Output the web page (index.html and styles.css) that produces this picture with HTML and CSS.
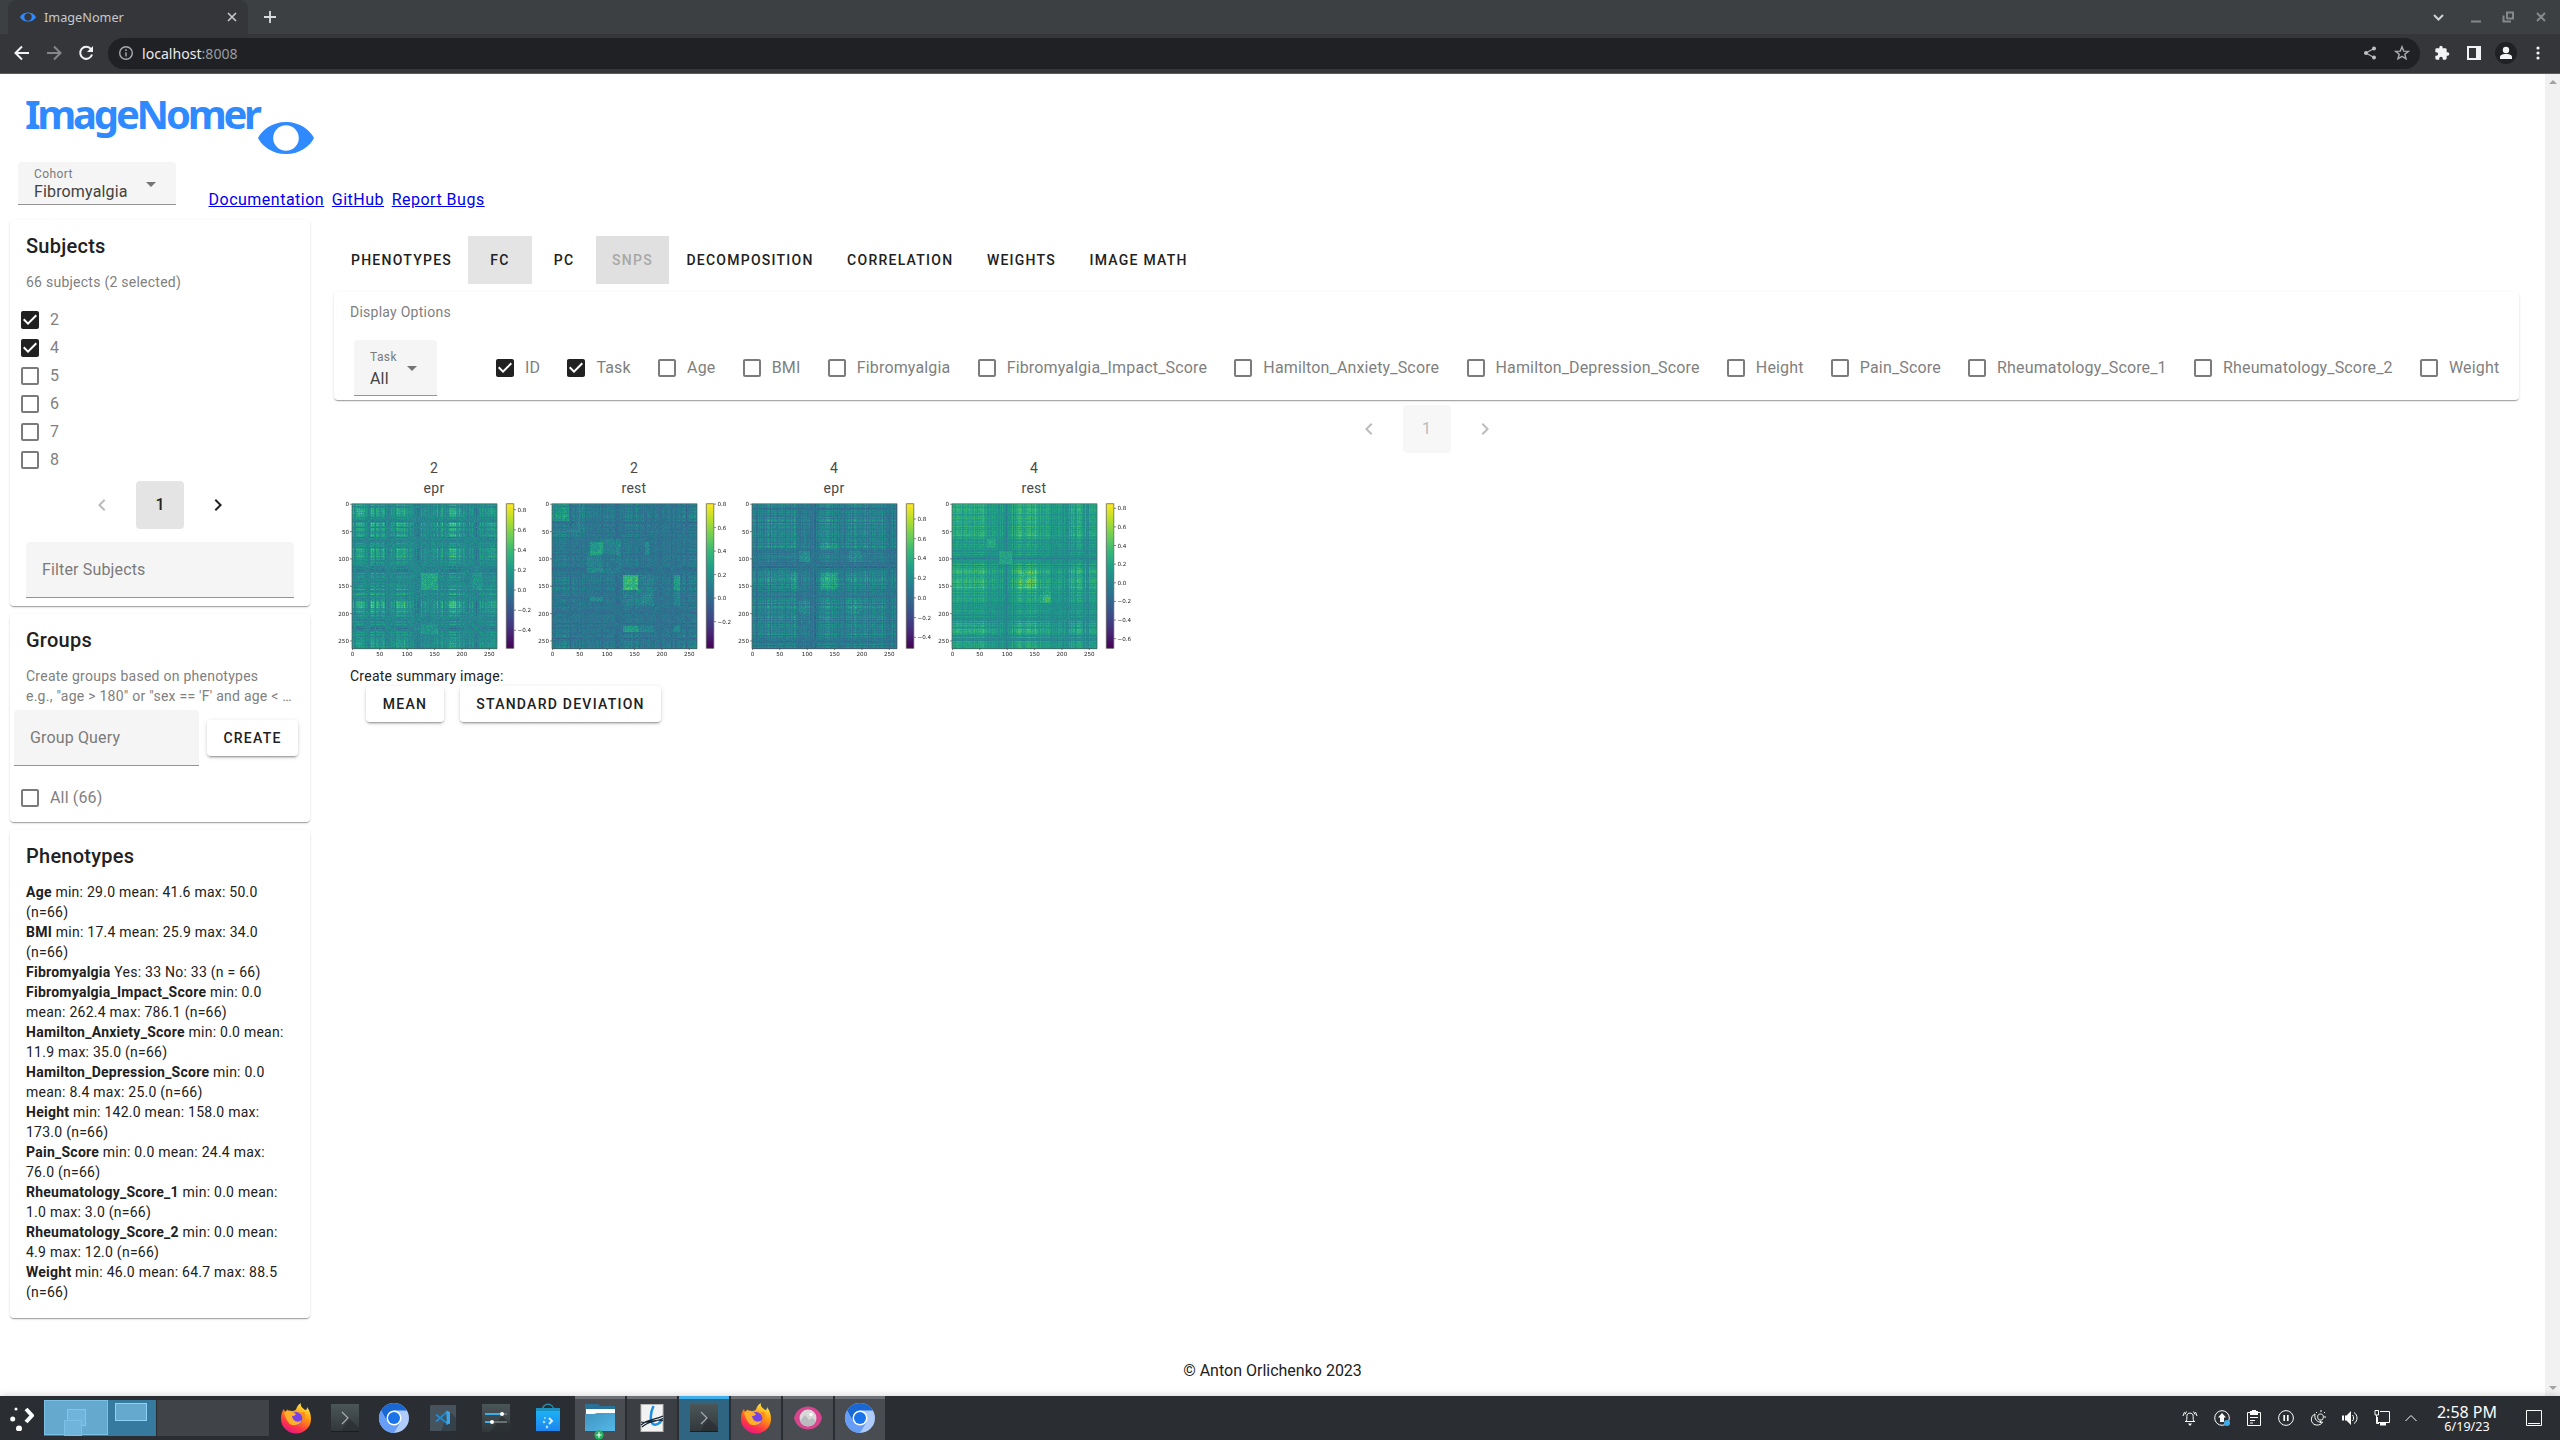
FILE: index.html
```html
<!DOCTYPE html>
<html lang="en">
<head>
<meta charset="utf-8">
<title>ImageNomer</title>
<link rel="stylesheet" href="styles.css">
</head>
<body>
<svg class="defs" width="0" height="0">
  <symbol id="box" viewBox="0 0 24 24"><path d="M19,3H5C3.89,3 3,3.89 3,5V19A2,2 0 0,0 5,21H19A2,2 0 0,0 21,19V5C21,3.89 20.1,3 19,3M19,5V19H5V5H19Z"/></symbol>
  <symbol id="box-on" viewBox="0 0 24 24"><path d="M10,17L5,12L6.41,10.58L10,14.17L17.59,6.58L19,8M19,3H5C3.89,3 3,3.89 3,5V19C3,20.1 3.89,21 5,21H19C20.1,21 21,20.1 21,19V5C21,3.89 20.1,3 19,3Z"/></symbol>
  <symbol id="left" viewBox="0 0 24 24"><path d="M15.41,16.58L10.83,12L15.41,7.41L14,6L8,12L14,18L15.41,16.58Z"/></symbol>
  <symbol id="right" viewBox="0 0 24 24"><path d="M8.59,16.58L13.17,12L8.59,7.41L10,6L16,12L10,18L8.59,16.58Z"/></symbol>
  <symbol id="down" viewBox="0 0 24 24"><path d="M7,10L12,15L17,10H7Z"/></symbol>
  <symbol id="eye" viewBox="0 0 56 32"><path fill-rule="evenodd" d="M0 16C4 8 14 0 28 0S52 8 56 16C52 24 42 32 28 32S4 24 0 16ZM28 3.3a12.8 12.7 0 1 0 0 25.4a12.8 12.7 0 1 0 0-25.4Z"/></symbol>
  <linearGradient id="ffBody" x1=".8" y1="0" x2=".3" y2="1"><stop offset="0" stop-color="#fff44f"/><stop offset=".4" stop-color="#ff980e"/><stop offset=".75" stop-color="#ff3647"/><stop offset="1" stop-color="#e31587"/></linearGradient>
  <linearGradient id="slate" x1="0" y1="0" x2="0" y2="1"><stop offset="0" stop-color="#4b5659"/><stop offset="1" stop-color="#31373a"/></linearGradient>
  <linearGradient id="folder" x1="0" y1="0" x2="1" y2="1"><stop offset="0" stop-color="#3f94be"/><stop offset="1" stop-color="#54b8ea"/></linearGradient>
  <linearGradient id="bag" x1="0" y1="0" x2="0" y2="1"><stop offset="0" stop-color="#1cb8f6"/><stop offset="1" stop-color="#1d83f0"/></linearGradient>
  <symbol id="firefox" viewBox="0 0 32 32">
    <path fill="url(#ffBody)" d="M21 1c-1 3 1 4.500 4 7c2 0 2-2 2-3c3 4 4 8 4 12a15 14.500 0 0 1-30 0c0-5 1-8 3-10l1 3c1-1 2-1.500 2-3c1 2 2 2 4 2.500c2-.5 4-1 5-2c1-3 2-5 5-6.500Z"/>
    <circle cx="16" cy="16.500" r="6.500" fill="#7542e5"/>
    <path fill="#ffb02a" d="M4 11c3-3 6-3 9-1l3 2c-1 2-3 2-4 2c1 6 6 7 10 4c-2 6-11 7-14 2c-2-3-3-6-4-9Z"/>
    <path fill="#ff8a16" d="M19 11c4 1 5 5 3 8c3-1 4-6 2-9Z"/>
  </symbol>
  <symbol id="konsole" viewBox="0 0 32 32">
    <rect x="2" y="2" width="28" height="28" fill="url(#slate)"/><path d="M20 16L30 26V30H12Z" fill="#262c2e" opacity=".6"/>
    <path d="M13 10L19 16L13 22" fill="none" stroke="#a8acae" stroke-width="1.200"/><path d="M2 29.500H30" stroke="#191e20"/>
  </symbol>
  <symbol id="chromium" viewBox="0 0 32 32">
    <circle cx="16" cy="16" r="15" fill="#aecbfa"/>
    <path fill="#1967d2" d="M3 8.500A15 15 0 0 1 29 8.500H16L9.500 20Z"/>
    <path fill="#669df6" d="M3 8.500A15 15 0 0 0 16 31L22.500 20L16 16L9.500 19.700Z"/>
    <circle cx="16" cy="16" r="7.500" fill="#fff"/><circle cx="16" cy="16" r="6" fill="#1a73e8"/>
  </symbol>
</svg>

<header class="browser">
  <div class="tabstrip">
    <div class="tab">
      <svg class="fav" width="16" height="10"><use href="#eye"/></svg>
      <span>ImageNomer</span>
      <svg class="tab-x" width="10" height="10" viewBox="0 0 10 10"><path d="M1 1L9 9M9 1L1 9"/></svg>
    </div>
    <svg class="plus" width="12" height="12" viewBox="0 0 12 12"><path d="M6 0V12M0 6H12"/></svg>
    <svg class="wm" width="116" height="14" viewBox="0 0 116 14">
      <path class="lit" d="M2 5L6.500 9.500L11 5"/><path d="M39 11.500H49M71.500 5.500V11.500H79M75 9V2.500H81V8.500H75ZM105 3L113 11M113 3L105 11"/>
    </svg>
  </div>
  <div class="toolbar">
    <div class="nav">
      <svg width="20" height="20" viewBox="0 0 20 20"><path d="M17 10H4M10 3.500L3.500 10L10 16.500"/></svg>
      <svg class="dim" width="20" height="20" viewBox="0 0 20 20"><path d="M3 10H16M10 3.500L16.500 10L10 16.500"/></svg>
      <svg width="20" height="20" viewBox="0 0 20 20"><path d="M15 6.200A6 6 0 1 0 16 11.500"/><path class="solid" d="M17 3V9H11Z"/></svg>
    </div>
    <div class="omni">
      <svg width="16" height="16" viewBox="0 0 16 16"><circle cx="8" cy="8" r="6.300"/><path d="M8 7.200V11.500M8 4.300V6"/></svg>
      <span class="url">localhost<span class="port">:8008</span></span>
      <svg class="share" width="16" height="16" viewBox="0 0 16 16"><path d="M12 3.500L4 8L12 12.500"/><circle class="solid" cx="12" cy="3.500" r="2"/><circle class="solid" cx="4" cy="8" r="2"/><circle class="solid" cx="12" cy="12.500" r="2"/></svg>
      <svg width="16" height="16" viewBox="0 0 16 16"><path d="M8 1.800L9.700 6.100L14.300 6.400L10.800 9.300L12 13.800L8 11.300L4 13.800L5.200 9.300L1.700 6.400L6.300 6.100Z"/></svg>
    </div>
    <div class="actions">
      <svg width="16" height="16" viewBox="0 0 24 24"><path d="M20.500 11H19V7a2 2 0 0 0-2-2h-4V3.500a2.500 2.500 0 0 0-5 0V5H4a2 2 0 0 0-2 2v3.800h1.500a2.700 2.700 0 0 1 0 5.400H2V20a2 2 0 0 0 2 2h3.800v-1.500a2.700 2.700 0 0 1 5.400 0V22H17a2 2 0 0 0 2-2v-4h1.500a2.500 2.500 0 0 0 0-5z"/></svg>
      <svg width="16" height="16" viewBox="0 0 16 16"><path fill-rule="evenodd" d="M1 1H15V15H1ZM3 3V13H10V3Z"/></svg>
      <svg width="22" height="22" viewBox="0 0 22 22"><circle cx="11" cy="11" r="11" fill="#202124"/><circle cx="11" cy="8" r="3.200"/><path d="M5 17V15C5 12.500 9 12 11 12S17 12.500 17 15V17Z"/></svg>
      <svg width="4" height="14" viewBox="0 0 4 14"><circle cx="2" cy="2" r="1.600"/><circle cx="2" cy="7" r="1.600"/><circle cx="2" cy="12" r="1.600"/></svg>
    </div>
  </div>
</header>

<div class="viewport">
  <div class="page">
    <svg class="logo" width="310" height="88" viewBox="0 0 310 88">
      <text x="15" y="54.500" textLength="237">ImageNomer</text>
      <svg x="248" y="48" width="56" height="32"><use href="#eye"/></svg>
    </svg>
    <div class="top-row">
      <div class="select cohort"><div><small>Cohort</small><span>Fibromyalgia</span></div><svg width="24" height="24"><use href="#down"/></svg></div>
      <nav class="links"><a href="#">Documentation</a><a href="#">GitHub</a><a href="#">Report Bugs</a></nav>
    </div>

    <div class="columns">
      <aside>
        <section class="card subjects">
          <h2>Subjects</h2>
          <p class="sub">66 subjects (2 selected)</p>
          <div class="checks">
            <label class="check on"><svg><use href="#box-on"/></svg>2</label>
            <label class="check on"><svg><use href="#box-on"/></svg>4</label>
            <label class="check"><svg><use href="#box"/></svg>5</label>
            <label class="check"><svg><use href="#box"/></svg>6</label>
            <label class="check"><svg><use href="#box"/></svg>7</label>
            <label class="check"><svg><use href="#box"/></svg>8</label>
          </div>
          <div class="pager"><svg class="off"><use href="#left"/></svg><b>1</b><svg><use href="#right"/></svg></div>
          <div class="field filter">Filter Subjects</div>
        </section>

        <section class="card groups">
          <h2>Groups</h2>
          <p class="sub">Create groups based on phenotypes<br>e.g., "age &gt; 180" or "sex == 'F' and age &lt; …</p>
          <div class="query"><div class="field">Group Query</div><button class="btn">CREATE</button></div>
          <label class="check all"><svg><use href="#box"/></svg>All (66)</label>
        </section>

        <section class="card phenotypes">
          <h2>Phenotypes</h2>
          <div class="stats">
            <p><b>Age</b> min: 29.0 mean: 41.6 max: 50.0<br>(n=66)</p>
            <p><b>BMI</b> min: 17.4 mean: 25.9 max: 34.0<br>(n=66)</p>
            <p><b>Fibromyalgia</b> Yes: 33 No: 33 (n = 66)</p>
            <p><b>Fibromyalgia_Impact_Score</b> min: 0.0<br>mean: 262.4 max: 786.1 (n=66)</p>
            <p><b>Hamilton_Anxiety_Score</b> min: 0.0 mean:<br>11.9 max: 35.0 (n=66)</p>
            <p><b>Hamilton_Depression_Score</b> min: 0.0<br>mean: 8.4 max: 25.0 (n=66)</p>
            <p><b>Height</b> min: 142.0 mean: 158.0 max:<br>173.0 (n=66)</p>
            <p><b>Pain_Score</b> min: 0.0 mean: 24.4 max:<br>76.0 (n=66)</p>
            <p><b>Rheumatology_Score_1</b> min: 0.0 mean:<br>1.0 max: 3.0 (n=66)</p>
            <p><b>Rheumatology_Score_2</b> min: 0.0 mean:<br>4.9 max: 12.0 (n=66)</p>
            <p><b>Weight</b> min: 46.0 mean: 64.7 max: 88.5<br>(n=66)</p>
          </div>
        </section>
      </aside>

      <main>
        <div class="tabs">
          <span>PHENOTYPES</span><span class="active">FC</span><span>PC</span><span class="disabled">SNPS</span><span>DECOMPOSITION</span><span>CORRELATION</span><span>WEIGHTS</span><span>IMAGE MATH</span>
        </div>
        <section class="card options">
          <p class="sub">Display Options</p>
          <div class="option-row">
            <div class="select task"><div><small>Task</small><span>All</span></div><svg width="24" height="24"><use href="#down"/></svg></div>
            <label class="check on"><svg><use href="#box-on"/></svg>ID</label>
            <label class="check on"><svg><use href="#box-on"/></svg>Task</label>
            <label class="check"><svg><use href="#box"/></svg>Age</label>
            <label class="check"><svg><use href="#box"/></svg>BMI</label>
            <label class="check"><svg><use href="#box"/></svg>Fibromyalgia</label>
            <label class="check"><svg><use href="#box"/></svg>Fibromyalgia_Impact_Score</label>
            <label class="check"><svg><use href="#box"/></svg>Hamilton_Anxiety_Score</label>
            <label class="check"><svg><use href="#box"/></svg>Hamilton_Depression_Score</label>
            <label class="check"><svg><use href="#box"/></svg>Height</label>
            <label class="check"><svg><use href="#box"/></svg>Pain_Score</label>
            <label class="check"><svg><use href="#box"/></svg>Rheumatology_Score_1</label>
            <label class="check"><svg><use href="#box"/></svg>Rheumatology_Score_2</label>
            <label class="check"><svg><use href="#box"/></svg>Weight</label>
          </div>
        </section>
        <div class="pager muted"><svg><use href="#left"/></svg><b>1</b><svg><use href="#right"/></svg></div>
        <div class="figures" id="figures"></div>
        <p class="summary">Create summary image:</p>
        <div class="buttons"><button class="btn mean">MEAN</button><button class="btn deviation">STANDARD DEVIATION</button></div>
      </main>
    </div>
    <footer>© Anton Orlichenko 2023</footer>
  </div>
  <div class="scrollbar"><i class="up"></i><i class="dn"></i></div>
</div>

<div class="taskbar">
  <svg class="kick" width="24" height="26" viewBox="0 0 24 26"><circle cx="6" cy="4" r="1.500"/><circle cx="2.700" cy="14" r="2.500"/><circle cx="9" cy="23.500" r="3"/><path d="M16 4L22 10.500L16 17" fill="none" stroke="#fff" stroke-width="4"/></svg>
  <svg class="desks" width="226" height="36" viewBox="0 0 226 36">
    <rect width="112" height="36" fill="#367a9f"/><rect x=".5" y=".5" width="63" height="34" fill="#66a9cf" stroke="#7bc0e6"/>
    <rect x="23.500" y="9.500" width="18" height="16" fill="#71b4db" stroke="#83c6ec"/><rect x="20.500" y="20.500" width="17" height="15" fill="#71b4db" stroke="#7bc0e6"/>
    <rect x="71.500" y="3.500" width="31" height="17" fill="#66a9cf" stroke="#8fd2f7"/><rect x="113" width="112" height="36" fill="#404347"/>
  </svg>
  <div class="launchers">
    <svg><use href="#firefox"/></svg>
    <svg><use href="#konsole"/></svg>
    <svg><use href="#chromium"/></svg>
    <svg viewBox="0 0 32 32"><rect x="3" y="3" width="26" height="26" rx="1" fill="#46525c"/><path d="M22 9L29 16V29H14Z" fill="#35414b"/><path d="M9 12.500L20.500 21.500M9 19.500L20.500 9.500" stroke="#2489ca" stroke-width="2" fill="none"/><path d="M19.500 8.500L23 10V21.500L19.500 23Z" fill="#3ba5ea"/></svg>
    <svg viewBox="0 0 32 32"><rect x="2" y="2" width="28" height="28" fill="url(#slate)"/><path d="M22 14L30 22V30H10Z" fill="#262b2d" opacity=".6"/><path d="M5 12H22M5 20H12" stroke="#3daee9" stroke-width="2"/><path d="M22 12H27M12 20H27" stroke="#6b7073" stroke-width="2"/><circle cx="22" cy="12" r="2" fill="#fff"/><circle cx="12" cy="20" r="2" fill="#fff"/></svg>
    <svg viewBox="0 0 32 32"><path d="M10 9C10 0 22 0 22 9" fill="none" stroke="#2f8ca8" stroke-width="1.400"/><path d="M4 6H28V29H4Z" fill="url(#bag)"/><path d="M4 6H28V9H4Z" fill="#1b92c4"/><path d="M17 16L20 19L17 22" fill="none" stroke="#d6efff" stroke-width="2"/><circle cx="12" cy="20" r="1.300" fill="#a6dbff"/><circle cx="15" cy="25" r="1.400" fill="#a6dbff"/><circle cx="13" cy="16" r="1" fill="#a6dbff"/></svg>
  </div>
  <div class="tasks">
    <div class="run"><svg viewBox="0 0 32 32"><path d="M1 2H14L16 4H31V12H1Z" fill="#287299"/><rect x="2" y="7" width="29" height="5" fill="#fff"/><path d="M1 12H10L13 11H31V29H1Z" fill="url(#folder)"/></svg><svg class="badge" viewBox="0 0 10 10"><circle cx="5" cy="5" r="4.700" fill="#27ae60"/><path d="M5 2.300V7.700M2.300 5H7.700" stroke="#fff" stroke-width="1.100"/></svg></div>
    <div class="run plain"><svg viewBox="0 0 32 32"><rect x="5" y="2.500" width="22" height="27" fill="#f2f2f2" stroke="#b9b9b9"/><path d="M17.500 4C14 11 14 19 17 22C20 24 25 21 25.500 17" fill="none" stroke="#1d8ee0" stroke-width="2.500"/><path d="M5 23C12 17 19 18 27 14M6 25C14 18 21 20 27 16.500M5 20C11 22 17 17 27 18.500" fill="none" stroke="#16232e" stroke-width="1.200"/></svg></div>
    <div class="run focus"><svg><use href="#konsole"/></svg></div>
    <div class="run"><svg><use href="#firefox"/></svg></div>
    <div class="run"><svg viewBox="0 0 32 32"><path d="M2 16C4 8 10 4.500 16 4.500S28 8 30 16C28 24 22 27.500 16 27.500S4 24 2 16Z" fill="#d9448f"/><circle cx="16" cy="16" r="8.500" fill="#d8d8d8"/><path d="M8 19L13 13L17 18L20 16L24 19C22 26 10 26 8 19Z" fill="#b9bcbe"/><circle cx="19" cy="12.500" r="1.800" fill="#fff"/></svg></div>
    <div class="run"><svg><use href="#chromium"/></svg></div>
  </div>
  <div class="tray">
    <svg viewBox="0 0 16 16"><path d="M3 11.500H13M4 11.500C5.500 9 4.500 7 5 5C5.500 2.500 10.500 2.500 11 5C11.500 7 10.500 9 12 11.500M2.500 2L1 6M4.500 1.500L3 4.500M13.500 2L15 6M11.500 1.500L13 4.500"/><path class="solid" d="M6 13.500H10L8 16Z"/></svg>
    <svg viewBox="0 0 16 16"><circle cx="8" cy="8" r="7.300"/><path class="solid" d="M8 3L12 7.500H10V12H6V7.500H4Z"/><circle cx="13" cy="13" r="3" fill="#3daee9" stroke="none"/></svg>
    <svg viewBox="0 0 16 16"><path d="M4 2.500H1.500V15.500H14.500V2.500H12M4 7.500H12M4 10.500H9M4 13H7"/><path class="solid" d="M4 1H6V0H10V1H12V5H4Z"/></svg>
    <svg viewBox="0 0 16 16"><circle cx="8" cy="8" r="7.400"/><path d="M6.200 5V11M9.800 5V11" stroke-width="1.700"/></svg>
    <svg viewBox="0 0 16 16"><path d="M5 4C0 6 0 14 6 15C9 15.500 12 14 12.500 12C7 13 4 9 5 4ZM9 10C7 8 7 4 10.500 4S14 8 12 10ZM10.500 11V13M11 0V2M15 2L14 3M6 2L7 3M14 7H16"/></svg>
    <svg viewBox="0 0 16 16"><path class="solid" d="M0 5.500H2V10.500H0ZM3 5.500H4.500L9 1V15L4.500 10.500H3Z"/><path d="M10.500 5C12 7 12 9 10.500 11M12 2.500C16 5 16 11 12 13.500"/></svg>
    <svg viewBox="0 0 16 16"><path d="M6 1.500H15.500V12.500H3.500V7M1 .500H4.500V5H1ZM2.500 5V13.500H5"/><path class="solid" d="M6 13H12V15.500H6Z"/></svg>
    <svg class="caret" viewBox="0 0 12 8"><path d="M.5 7L6 1.500L11.500 7"/></svg>
  </div>
  <div class="clock"><span>2:58 PM</span><small>6/19/23</small></div>
  <svg class="show" width="16" height="16" viewBox="0 0 16 16"><path d="M.5 .5H15.500V15.500H.5ZM2 13.500H14"/></svg>
</div>
<script src="plots.js"></script>
</body>
</html>
```
FILE: styles.css
```css
* { box-sizing: border-box; }
body { margin: 0; width: 2560px; height: 1440px; overflow: hidden; display: flex; flex-direction: column; background: #fff; font-family: Roboto, sans-serif; color: #212121; }
p, h2 { margin: 0; }
.defs { position: absolute; }

/* browser window */
.browser { height: 74px; flex: none; font-family: "Noto Sans", sans-serif; border-bottom: 1px solid #5b5d61; background: #35363a; }
.tabstrip { height: 34px; background: #3c4043; display: flex; align-items: center; padding-left: 8px; }
.tab { width: 240px; height: 34px; background: #35363a; border-radius: 8px 8px 0 0; display: flex; align-items: center; padding: 0 11px 0 12px; font-size: 12.7px; color: #c6c8cb; }
.tab span { flex: 1; margin-left: 8px; }
.fav, .logo { fill: #2f8aff; }
.tab-x { fill: none; stroke: #c9cccf; stroke-width: 1.6; }
.plus { margin-left: 16px; stroke: #dadce0; stroke-width: 1.8; }
.wm { margin-left: auto; margin-right: 12px; fill: none; stroke: #85888b; stroke-width: 2; }
.wm .lit { stroke: #d0d3d6; }
.toolbar { height: 38px; display: flex; align-items: center; }
.nav { display: flex; gap: 12px; padding: 0 12px; width: 108px; }
.nav svg { fill: none; stroke: #f1f3f4; stroke-width: 2; flex: none; }
.nav .dim { stroke: #85878a; }
.nav .solid { fill: #f1f3f4; stroke: none; }
.omni { width: 2312px; height: 31px; border-radius: 16px; background: #202124; display: flex; align-items: center; padding: 0 10px; }
.omni svg { fill: none; stroke: #a9adb1; stroke-width: 1.4; }
.omni .solid { fill: #bdc1c6; stroke: none; }
.omni .share { margin-left: auto; margin-right: 16px; }
.url { margin-left: 8px; font-size: 14.1px; color: #e8eaed; }
.port { color: #989a9e; }
.actions { flex: 1; display: flex; align-items: center; padding-left: 14px; gap: 16px; }
.actions svg { fill: #f1f3f4; }
.actions svg:nth-child(3) { margin-left: -3px; }
.actions svg:nth-child(4) { margin-left: 3px; }

/* page */
.viewport { flex: 1; display: flex; min-height: 0; }
.page { width: 2545px; padding-left: 10px; }
.scrollbar { width: 15px; background: #f1f1f1; display: flex; flex-direction: column; justify-content: space-between; align-items: center; padding: 6px 0; }
.scrollbar i { border: 4px solid transparent; }
.scrollbar .up { border-top: 0; border-bottom-color: #a3a3a3; }
.scrollbar .dn { border-bottom: 0; border-top-color: #a3a3a3; }
.logo { display: block; overflow: visible; }
.logo text { font: bold 40px "Noto Sans", sans-serif; }
.top-row { height: 58px; display: flex; align-items: flex-start; padding-left: 8px; }
.select { background: #f5f5f5; border-bottom: 1px solid #949494; border-radius: 4px 4px 0 0; display: flex; justify-content: space-between; align-items: center; padding-left: 16px; }
.select div { display: flex; flex-direction: column; }
.select small { font-size: 12px; letter-spacing: .4px; color: #7b7b7b; line-height: 16px; }
.select span { font-size: 16px; letter-spacing: .15px; color: #424242; line-height: 20px; }
.select svg { fill: #757575; }
.cohort { width: 158px; height: 43px; padding-right: 13px; }
.cohort div { padding-top: 1px; }
.cohort svg { margin-top: 2px; }
.links { display: flex; gap: 7.6px; margin: 26px 0 0 32.500px; font-size: 16px; line-height: 24px; letter-spacing: .5px; }
.links a { color: #0000ee; }
.columns { display: flex; align-items: flex-start; gap: 24px; }
aside { width: 300px; display: flex; flex-direction: column; gap: 8px; }
.card { background: #fff; border-radius: 4px; box-shadow: 0 2px 1px -1px rgba(0,0,0,.2), 0 1px 1px rgba(0,0,0,.14), 0 1px 3px rgba(0,0,0,.12); }
.card h2 { font-size: 20px; font-weight: 500; letter-spacing: .25px; line-height: 32px; padding: 10px 16px; }
.sub { font-size: 14px; line-height: 20px; letter-spacing: .25px; color: #808080; padding: 0 16px; white-space: nowrap; }
.subjects { height: 386px; }
.groups { height: 208px; }
.phenotypes { height: 488px; }
.checks { padding: 14px 8px 0; }
.check { display: flex; align-items: center; height: 28px; padding-bottom: 1px; font-size: 16px; letter-spacing: .15px; color: #7f7f7f; white-space: nowrap; }
.check svg { width: 24px; height: 24px; fill: #7b7b7b; margin: 1px 8px 0 0; flex: none; }
.check.on svg { fill: #212121; }
.pager { display: flex; justify-content: center; align-items: center; gap: 22px; height: 48px; }
.pager svg { width: 24px; height: 24px; fill: #212121; }
.pager b { width: 48px; height: 48px; line-height: 48px; margin: 0; text-align: center; background: #e4e4e4; border-radius: 4px; font-size: 16px; font-weight: 500; }
.pager .off { fill: #bcbcbc; }
.pager.muted { color: #bcbcbc; margin-top: 5px; }
.pager.muted svg { fill: #bcbcbc; }
.pager.muted b { background: #f7f7f7; font-weight: 400; }
.subjects .pager { margin-top: 7px; }
.field { height: 56px; background: #f5f5f5; border-bottom: 1px solid #949494; border-radius: 4px 4px 0 0; padding-left: 16px; font-size: 16px; letter-spacing: .15px; line-height: 55px; color: #7b7b7b; }
.filter { margin: 13px 16px 0; }
.query { display: flex; align-items: center; gap: 8px; padding: 4px 12px 0 4px; }
.query .field { width: 185px; }
.btn { height: 36px; border: 0; background: #fff; border-radius: 4px; padding: 0; font: 500 14px Roboto, sans-serif; letter-spacing: 1.25px; color: #212121; white-space: nowrap; box-shadow: 0 3px 1px -2px rgba(0,0,0,.2), 0 2px 2px rgba(0,0,0,.14), 0 1px 5px rgba(0,0,0,.12); }
.query .btn { width: 91px; }
.mean { width: 78px; }
.deviation { width: 201px; }
.check.all { margin: 18px 8px 0; letter-spacing: .15px; }
.stats { padding: 0 16px; font-size: 14px; line-height: 20px; letter-spacing: .25px; white-space: nowrap; }

main { width: 2185px; padding-top: 16px; }
.tabs { display: flex; height: 48px; padding-left: 1px; }
.tabs span { min-width: 64px; padding: 0 16px; text-align: center; line-height: 49px; font-size: 14px; font-weight: 500; letter-spacing: 1.25px; white-space: nowrap; }
.tabs span:nth-child(n+5) { margin-left: 1.5px; }
.tabs .active { background: #e4e4e4; }
.tabs .disabled { background: #e0e0e0; color: #a8a8a8; }
.options { margin-top: 8px; height: 108px; padding-top: 10px; }
.option-row { display: flex; align-items: flex-start; padding: 18px 0 0 20px; }
.option-row .check { height: 56px; margin-right: 24.300px; }
.task { flex: none; width: 83px; height: 56px; margin: 0 56px 0 0; padding-right: 13px; }
.task small { margin-top: 2px; line-height: 20px; }
.task span { line-height: 24px; }
.figures { display: flex; margin-top: 5px; }
figure { margin: 0; width: 200px; }
figcaption { text-align: center; font-size: 14px; line-height: 20px; letter-spacing: .25px; color: #4a4a4a; }
.plot { position: relative; height: 168px; }
.plot canvas { position: absolute; left: 18px; top: 6px; }
.plot svg { position: absolute; left: 0; top: 0; font: 5.6px "DejaVu Sans", sans-serif; fill: #222; overflow: visible; }
.plot svg .axes { fill: none; stroke: #555; stroke-width: .7; }
.summary { font-size: 14px; line-height: 20px; letter-spacing: .25px; padding-left: 16px; }
.buttons { display: flex; gap: 16px; padding-left: 32px; }
footer { text-align: center; font-size: 16px; line-height: 24px; margin: 41px 10px 0 0; }

/* desktop panel */
.taskbar { height: 44px; flex: none; background: #2a2e32; display: flex; align-items: center; box-shadow: 0 0 8px rgba(0,0,0,.2); z-index: 1; }
.kick { margin-left: 10px; fill: #fff; }
.desks { margin-left: 10px; }
.launchers { display: flex; gap: 17px; margin-left: 10px; }
.launchers svg, .run svg { width: 32px; height: 32px; display: block; }
.launchers svg:nth-child(5) { margin-left: 4px; }
.launchers svg:nth-child(6) { margin-left: 3px; }
.tasks { display: flex; gap: 2px; margin-left: 11px; height: 44px; }
.run { width: 50px; border-top: 3px solid #6c6f73; background: #494c50; display: flex; justify-content: center; align-items: center; padding-bottom: 3px; position: relative; }
.run.plain { background: #3b3e42; }
.run.focus { background: #306582; border-top-color: #3daee9; }
.run .badge { position: absolute; left: 19px; bottom: 0; width: 10px; height: 10px; }
.tray { margin-left: auto; display: flex; gap: 16px; align-items: center; }
.tray svg { width: 16px; height: 16px; fill: none; stroke: #fcfcfc; stroke-width: 1; overflow: visible; }
.tray .solid { fill: #fcfcfc; stroke: none; }
.tray .caret { width: 12px; height: 8px; margin-left: -1px; }
.clock { width: 100px; text-align: center; font-family: "Noto Sans", sans-serif; color: #fcfcfc; display: flex; flex-direction: column; }
.clock span { font-size: 16px; line-height: 16px; }
.clock small { font-size: 12.6px; line-height: 13px; }
.show { margin: 0 18px 0 9px; fill: none; stroke: #fcfcfc; }
```
FILE: plots.js
```js
// Connectivity matrices: band profiles combined as symmetric products, coloured with viridis.
const N = 145;
const REGIONS = 264;
const VIRIDIS = [[68,1,84],[72,40,120],[62,74,137],[49,104,142],[38,130,142],[31,158,137],[53,183,121],[110,206,88],[181,222,43],[253,231,37]];

const subjects = [
  { id: '2', task: 'epr', base: .475, add: .04, mul: .045, grain: .05, stripe: .62, seed: 11, first: 6, step: 20.1, top: .8, count: 7,
    bands: [[0,28,.3],[33,48,.95],[48,60,.5],[60,80,-.3],[80,100,1.1],[100,110,.6],[112,125,-.4],[155,170,.4],[170,196,1.0],[196,215,.3],[215,245,-.2],[245,264,.5]],
    blocks: [[125,156,125,156,.11],[0,28,0,28,.03],[220,235,125,155,.06]] },
  { id: '2', task: 'rest', base: .395, add: .03, mul: .018, grain: .045, stripe: .8, seed: 23, first: .1, step: 23.5, top: .8, count: 6,
    bands: [[0,30,.5],[30,50,.1],[62,82,-.3],[110,122,-.5],[125,155,.4],[160,200,-.5],[200,218,-.2],[235,264,.1]],
    blocks: [[0,30,0,30,.09],[68,92,68,92,.13],[84,122,62,92,.05],[128,155,128,155,.23],[222,232,128,155,.15],[155,185,128,155,.04],[155,185,155,185,.06],[169,175,68,92,.1],[45,60,0,60,.04],[222,232,222,232,.11],[115,124,62,122,.05],[222,232,155,185,.07]] },
  { id: '4', task: 'epr', base: .425, add: .05, mul: .02, grain: .045, stripe: .8, seed: 37, first: 15.3, step: 19.72, top: .8, count: 7,
    bands: [[0,24,.25],[24,55,.2],[70,83,.8],[83,110,-.7],[110,118,-.5],[120,157,.8],[158,168,-.8],[168,195,.1],[215,236,.5],[238,250,-.8],[254,264,-.7]],
    blocks: [[84,105,84,105,.1],[125,155,125,155,.09],[125,155,70,83,.05],[175,200,84,105,.06],[170,200,170,200,.03]] },
  { id: '4', task: 'rest', base: .545, add: .06, mul: .018, grain: .035, stripe: .7, seed: 53, first: 4.6, step: 18.62, top: .8, count: 8,
    bands: [[0,20,.5],[20,60,.7],[61,75,-.2],[80,108,-.9],[110,118,.1],[120,156,1.1],[156,190,-.1],[190,212,-.5],[215,236,.6],[236,250,-.6],[250,264,.4]],
    blocks: [[62,80,62,80,.08],[84,108,84,108,.09],[122,154,122,154,.06],[165,180,165,180,.1],[165,180,155,165,.04]] }
];

function random(seed) {
  let s = seed * 7919;
  return () => { s = (s * 1664525 + 1013904223) >>> 0; return s / 4294967296; };
}

function viridis(t) {
  const x = Math.max(0, Math.min(.999, t)) * (VIRIDIS.length - 1);
  const k = Math.floor(x), f = x - k;
  return VIRIDIS[k].map((c, i) => c + (VIRIDIS[k + 1][i] - c) * f);
}

function drawMatrix(canvas, s) {
  canvas.width = canvas.height = N;
  const rnd = random(s.seed);
  const profile = Array.from({ length: N }, (_, i) => {
    const r = i / N * REGIONS;
    const band = s.bands.find(b => r >= b[0] && r < b[1]);
    let n = (rnd() + rnd() + rnd() - 1.5) * 2 * s.stripe;
    if (rnd() < .07) n -= s.stripe * 1.5;
    return (band ? band[2] : 0) + n;
  });
  const ctx = canvas.getContext('2d');
  const img = ctx.createImageData(N, N);
  for (let i = 0; i < N; i++) {
    for (let j = 0; j <= i; j++) {
      const a = i / N * REGIONS, b = j / N * REGIONS;
      const p = profile[i], q = profile[j];
      let v = s.base + s.add * (p + q) / 1.6 + s.mul * p * q + (rnd() - .5) * 2 * s.grain;
      for (const k of s.blocks) {
        if ((a >= k[0] && a < k[1] && b >= k[2] && b < k[3]) || (b >= k[0] && b < k[1] && a >= k[2] && a < k[3])) {
          v += k[4] + (rnd() - .5) * .1;
        }
      }
      const c = viridis(Math.max(.22, Math.min(.86, v)));
      for (const o of [(i * N + j) * 4, (j * N + i) * 4]) {
        img.data[o] = c[0]; img.data[o + 1] = c[1]; img.data[o + 2] = c[2]; img.data[o + 3] = 255;
      }
    }
  }
  ctx.putImageData(img, 0, 0);
}

const stops = VIRIDIS.map((c, i) => `<stop offset="${i / 9}" stop-color="rgb(${c})"/>`).join('');

function axes(s, n) {
  let ticks = '', text = '';
  for (let v = 0; v <= 250; v += 50) {
    const p = v / REGIONS * 144.4;
    ticks += `M16 ${6.2 + p}H18M${18.5 + p} 150V152`;
    text += `<text x="15" y="${8.2 + p}" text-anchor="end">${v}</text><text x="${18.5 + p}" y="157.500" text-anchor="middle">${v}</text>`;
  }
  for (let k = 0; k < s.count; k++) {
    const y = 6 + s.first + k * s.step - (s.first > 1 ? .3 : 0);
    const value = (s.top - k * .2);
    const label = Math.abs(value) < .01 ? '0.0' : value.toFixed(1).replace('-', '\u2212');
    ticks += `M180 ${y}H182`;
    text += `<text x="183.500" y="${y + 2}">${label}</text>`;
  }
  return `<svg width="200" height="168"><defs><linearGradient id="bar${n}" x1="0" y1="1" x2="0" y2="0">${stops}</linearGradient></defs>
    <rect x="172.300" y="5.700" width="7.500" height="144.600" fill="url(#bar${n})"/>
    <path class="axes" d="M18 5.700H163V150.700H18ZM172.300 5.700H179.800V150.300H172.300Z${ticks}"/>${text}</svg>`;
}

const host = document.getElementById('figures');
subjects.forEach((s, n) => {
  const fig = document.createElement('figure');
  fig.innerHTML = `<figcaption>${s.id}<br>${s.task}</figcaption><div class="plot"><canvas></canvas>${axes(s, n)}</div>`;
  host.append(fig);
  drawMatrix(fig.querySelector('canvas'), s);
});
```
